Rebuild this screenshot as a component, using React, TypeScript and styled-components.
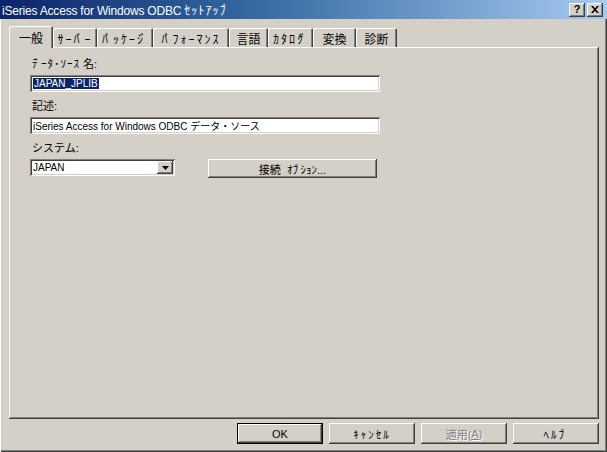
import React from "react";
import styled, { createGlobalStyle, css } from "styled-components";

const Global = createGlobalStyle`
  html, body { margin: 0; padding: 0; background: #d4d0c8; }
  body { font-family: "Liberation Sans", "Noto Sans CJK JP", sans-serif; font-size: 12px; color: #000; }
`;

const raised = css`
  box-shadow: inset -1px -1px #404040, inset 1px 1px #ffffff, inset -2px -2px #808080, inset 2px 2px #d4d0c8;
`;
const sunken = css`
  box-shadow: inset 1px 1px #808080, inset -1px -1px #ffffff, inset 2px 2px #404040, inset -2px -2px #d4d0c8;
`;

/* half-width kana followed by a voiced mark: pull the mark onto the kana */
const Base = styled.span`
  letter-spacing: -3px;
`;

const Half = styled.span<{ $ls?: number }>`
  letter-spacing: ${(p) => p.$ls ?? 0}px;
`;

const Kana: React.FC<{ text: string; ls?: number }> = ({ text, ls }) => {
  const chars = Array.from(text);
  return (
    <Half $ls={ls}>
      {chars.map((ch, i) =>
        chars[i + 1] === "ﾞ" || chars[i + 1] === "ﾟ" ? (
          <Base key={i}>{ch}</Base>
        ) : (
          <React.Fragment key={i}>{ch}</React.Fragment>
        )
      )}
    </Half>
  );
};

const Window = styled.div`
  width: 607px;
  height: 452px;
  box-sizing: border-box;
  background: #d4d0c8;
  display: flex;
  flex-direction: column;
  box-shadow: inset 1px 0 #ffffff, inset -1px -1px #404040, inset -2px -2px #808080;
  overflow: hidden;
`;

const TitleBar = styled.div`
  height: 19px;
  flex: none;
  display: flex;
  align-items: center;
  justify-content: space-between;
  background: linear-gradient(90deg, #0a246a 0%, #3a6ea5 45%, #a6caf0 100%);
  padding: 0 4px 0 2px;
`;

const Title = styled.span`
  color: #fff;
  font-size: 12px;
  letter-spacing: -0.2px;
  white-space: pre;
`;

const TitleButtons = styled.div`
  display: flex;
  gap: 2px;
`;

const CaptionButton = styled.div`
  width: 16px;
  height: 14px;
  background: #d4d0c8;
  ${raised};
  display: flex;
  align-items: center;
  justify-content: center;
  font-weight: bold;
  font-size: 11px;
  line-height: 1;
`;

const Body = styled.div`
  flex: 1;
  display: flex;
  flex-direction: column;
  padding: 6px 8px 0 9px;
`;

const TabStrip = styled.div`
  display: flex;
  align-items: flex-end;
  height: 22px;
  position: relative;
  z-index: 1;
`;

const Tab = styled.div<{ $w: number; $active?: boolean }>`
  width: ${(p) => p.$w}px;
  box-sizing: border-box;
  height: ${(p) => (p.$active ? 22 : 19)}px;
  margin-bottom: ${(p) => (p.$active ? -1 : 0)}px;
  background: #d4d0c8;
  border-radius: 2px 2px 0 0;
  box-shadow: inset 1px 1px #ffffff, inset -1px 0 #404040, inset -2px 0 #808080;
  display: flex;
  align-items: center;
  justify-content: center;
  font-size: 12px;
  padding-top: ${(p) => (p.$active ? 0 : 1)}px;
  white-space: nowrap;
`;

const Panel = styled.div`
  width: 590px;
  height: 372px;
  box-sizing: border-box;
  ${raised};
  padding: 10px 20px 0 21px;
  display: flex;
  flex-direction: column;
`;

const Label = styled.div`
  font-size: 11px;
  height: 14px;
  line-height: 14px;
  margin-left: 2px;
  margin-bottom: 4px;
  white-space: pre;
`;

const Field = styled.div<{ $w: number }>`
  width: ${(p) => p.$w}px;
  height: 17px;
  box-sizing: border-box;
  background: #fff;
  ${sunken};
  padding: 2px 3px;
  display: flex;
  align-items: center;
  font-size: 10px;
  white-space: nowrap;
  margin-bottom: 7px;
`;

const Selected = styled.span`
  background: #0a246a;
  color: #fff;
  padding: 0 1px;
`;

const Row = styled.div`
  display: flex;
  align-items: flex-start;
  gap: 33px;
`;

const Combo = styled(Field)`
  justify-content: space-between;
  padding-right: 2px;
  margin-bottom: 0;
`;

const DropButton = styled.div`
  width: 16px;
  height: 13px;
  background: #d4d0c8;
  ${raised};
  display: flex;
  align-items: center;
  justify-content: center;
`;

const PushButton = styled.div<{ $w: number; $default?: boolean; $disabled?: boolean }>`
  width: ${(p) => p.$w}px;
  height: 21px;
  box-sizing: border-box;
  background: #d4d0c8;
  ${(p) =>
    p.$default
      ? css`box-shadow: inset 0 0 0 1px #000, inset -2px -2px #404040, inset 2px 2px #ffffff, inset -3px -3px #808080;`
      : raised};
  display: flex;
  align-items: center;
  justify-content: center;
  font-size: 11px;
  color: ${(p) => (p.$disabled ? "#808080" : "#000")};
  text-shadow: ${(p) => (p.$disabled ? "1px 1px #fff" : "none")};
  white-space: pre;
`;

const OptionButton = styled(PushButton)`
  height: 19px;
`;

const Mnemonic = styled.span`
  text-decoration: underline;
`;

const Footer = styled.div`
  display: flex;
  justify-content: flex-end;
  gap: 6px;
  padding-top: 4px;
`;

const tabs: { t: string; w: number; a?: boolean; kana?: boolean }[] = [
  { t: "一般", w: 44, a: true },
  { t: "ｻｰﾊﾞｰ", w: 44, kana: true },
  { t: "ﾊﾟｯｹｰｼﾞ", w: 56, kana: true },
  { t: "ﾊﾟﾌｫｰﾏﾝｽ", w: 76, kana: true },
  { t: "言語", w: 39 },
  { t: "ｶﾀﾛｸﾞ", w: 45, kana: true },
  { t: "変換", w: 43 },
  { t: "診断", w: 41 },
];

export default function App() {
  return (
    <>
      <Global />
      <Window>
        <TitleBar>
          <Title>
            {"iSeries Access for Windows ODBC "}
            <Kana text="ｾｯﾄｱｯﾌﾟ" ls={1} />
          </Title>
          <TitleButtons>
            <CaptionButton>?</CaptionButton>
            <CaptionButton>
              <svg width="8" height="7" viewBox="0 0 8 7">
                <path d="M0 0h2l2 2.2L6 0h2L5 3.5 8 7H6L4 4.8 2 7H0l3-3.5z" fill="#000" />
              </svg>
            </CaptionButton>
          </TitleButtons>
        </TitleBar>
        <Body>
          <TabStrip>
            {tabs.map((t) => (
              <Tab key={t.t} $w={t.w} $active={t.a}>
                {t.kana ? <Kana text={t.t} ls={2} /> : t.t}
              </Tab>
            ))}
          </TabStrip>
          <Panel>
            <Label>
              <Kana text="ﾃﾞｰﾀ･ｿｰｽ" ls={1} />
              {" 名:"}
            </Label>
            <Field $w={350}>
              <Selected>JAPAN_JPLIB</Selected>
            </Field>
            <Label>記述:</Label>
            <Field $w={350}>iSeries Access for Windows ODBC データ・ソース</Field>
            <Label>システム:</Label>
            <Row>
              <Combo $w={145}>
                <span>JAPAN</span>
                <DropButton>
                  <svg width="7" height="4" viewBox="0 0 7 4">
                    <path d="M0 0h7L3.5 4z" fill="#000" />
                  </svg>
                </DropButton>
              </Combo>
              <OptionButton $w={169}>
                {"接続  "}
                <Kana text="ｵﾌﾟｼｮﾝ..." />
              </OptionButton>
            </Row>
          </Panel>
          <Footer>
            <PushButton $w={86} $default>OK</PushButton>
            <PushButton $w={86}>
              <Kana text="ｷｬﾝｾﾙ" ls={2} />
            </PushButton>
            <PushButton $w={86} $disabled>
              適用(<Mnemonic>A</Mnemonic>)
            </PushButton>
            <PushButton $w={86}>
              <Kana text="ﾍﾙﾌﾟ" ls={2} />
            </PushButton>
          </Footer>
        </Body>
      </Window>
    </>
  );
}
